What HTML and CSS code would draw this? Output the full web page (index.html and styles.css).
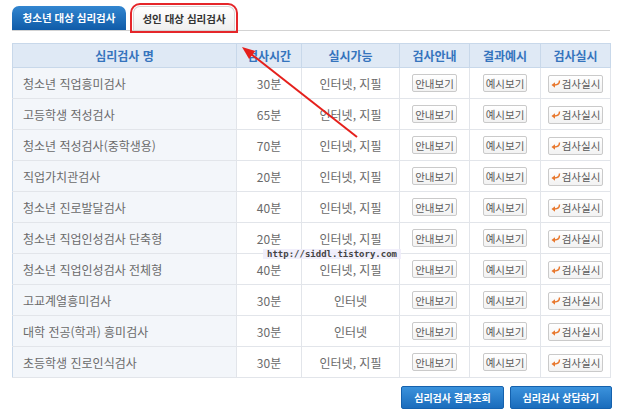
FILE: index.html
```html
<!DOCTYPE html>
<html lang="ko">
<head>
  <meta charset="UTF-8" />
  <title>심리검사 목록</title>
  <link rel="stylesheet" href="styles.css">
</head>
<body>
  <div class="page">
    <div class="tabs">
      <a class="tab tab-on">청소년 대상 심리검사</a>
      <a class="tab tab-off">성인 대상 심리검사</a>
    </div>

    <table class="test-table">
      <colgroup>
        <col style="width:224px"><col style="width:65px"><col style="width:98px">
        <col style="width:70px"><col style="width:71px"><col style="width:70px">
      </colgroup>
      <thead>
        <tr>
          <th>심리검사 명</th>
          <th>검사시간</th>
          <th>실시가능</th>
          <th>검사안내</th>
          <th>결과예시</th>
          <th>검사실시</th>
        </tr>
      </thead>
      <tbody id="testRows"></tbody>
    </table>

    <div class="actions">
      <button class="btn-blue">심리검사 결과조회</button>
      <button class="btn-blue">심리검사 상담하기</button>
    </div>
  </div>

  <div class="watermark">http://siddl.tistory.com</div>

  <svg class="pointer" width="620" height="417" viewBox="0 0 620 417">
    <line x1="357" y1="137" x2="251" y2="54" stroke="#e5201c" stroke-width="2" />
    <polygon points="242,47 255.3,51.1 249.1,58.9" fill="#e5201c" />
  </svg>

  <script>
    const tests = [
      ["청소년 직업흥미검사", "30분", "인터넷, 지필"],
      ["고등학생 적성검사", "65분", "인터넷, 지필"],
      ["청소년 적성검사(중학생용)", "70분", "인터넷, 지필"],
      ["직업가치관검사", "20분", "인터넷, 지필"],
      ["청소년 진로발달검사", "40분", "인터넷, 지필"],
      ["청소년 직업인성검사 단축형", "20분", "인터넷, 지필"],
      ["청소년 직업인성검사 전체형", "40분", "인터넷, 지필"],
      ["고교계열흥미검사", "30분", "인터넷"],
      ["대학 전공(학과) 흥미검사", "30분", "인터넷"],
      ["초등학생 진로인식검사", "30분", "인터넷, 지필"]
    ];

    const icon = `<svg class="go-icon" width="10" height="8" viewBox="0 0 10 8">
      <path d="M8.5 0.5 C8.5 4 7 5 3.5 5" fill="none" stroke="#e8782e" stroke-width="1.4" />
      <polygon points="0.5,5 4,2.2 4,7.8" fill="#e8782e" />
    </svg>`;

    const body = document.getElementById("testRows");
    tests.forEach(t => {
      const tr = document.createElement("tr");
      tr.innerHTML = `
        <td class="name">${t[0]}</td>
        <td>${t[1]}</td>
        <td>${t[2]}</td>
        <td><span class="btn-sm">안내보기</span></td>
        <td><span class="btn-sm">예시보기</span></td>
        <td><span class="btn-sm">${icon}검사실시</span></td>
      `;
      body.appendChild(tr);
    });
  </script>
</body>
</html>
```

FILE: styles.css
```css
body {
  margin: 0;
  font-family: "Noto Sans CJK KR", "Noto Sans", sans-serif;
  font-size: 12px;
  color: #6a6a6a;
  background: #fff;
}
.page {
  width: 598px;
  margin-left: 12px;
  padding-top: 6px;
}
.tabs {
  display: flex;
  gap: 7px;
  border-bottom: 1px solid #d3d3d3;
}
.tab {
  height: 24px;
  line-height: 24px;
  text-align: center;
  font-size: 10.5px;
  font-weight: bold;
  border-radius: 7px 7px 0 0;
  box-sizing: border-box;
}
.tab-on {
  width: 114px;
  color: #fff;
  background: linear-gradient(#3286d0, #0f5ba8);
}
.tab-off {
  width: 102px;
  color: #333;
  background: linear-gradient(#fff, #efefef);
  border: 1px solid #d6d6d6;
  border-bottom: none;
  outline: 2px solid #e5262a;
  outline-offset: 1px;
}
.test-table {
  width: 598px;
  margin-top: 12px;
  border-collapse: collapse;
  table-layout: fixed;
}
.test-table th {
  height: 23px;
  padding: 0;
  background: #dfe9f5;
  color: #3574bd;
  font-weight: bold;
  border: 1px solid #c8d8ea;
}
.test-table td {
  height: 30px;
  padding: 0;
  text-align: center;
  border: 1px solid #e2e5ea;
}
.test-table td.name {
  text-align: left;
  padding-left: 10px;
  background: #f3f6fa;
  border-left-color: #c8d8ea;
}
.btn-sm {
  display: inline-flex;
  align-items: center;
  height: 18px;
  padding: 0 2px;
  border: 1px solid #cacaca;
  border-radius: 2px;
  background: linear-gradient(#fff, #f2f2f2);
  font-size: 10.5px;
  color: #5a5a5a;
  box-sizing: border-box;
}
.go-icon {
  margin-right: 1px;
}
.actions {
  display: flex;
  justify-content: flex-end;
  gap: 6px;
  margin-top: 8px;
  margin-right: -2px;
}
.btn-blue {
  height: 23px;
  padding: 0 12px;
  border: 1px solid #1561ad;
  border-radius: 2px;
  background: linear-gradient(#3b92dc, #1a6cbc);
  color: #fff;
  font-family: inherit;
  font-size: 10px;
  font-weight: bold;
}
.watermark {
  position: absolute;
  left: 263px;
  top: 249px;
  padding: 0 4px;
  background: rgba(238, 236, 250, 0.85);
  font-family: "DejaVu Sans Mono", monospace;
  font-size: 9px;
  font-weight: bold;
  color: #444;
}
.pointer {
  position: absolute;
  left: 0;
  top: 0;
  pointer-events: none;
}
```
